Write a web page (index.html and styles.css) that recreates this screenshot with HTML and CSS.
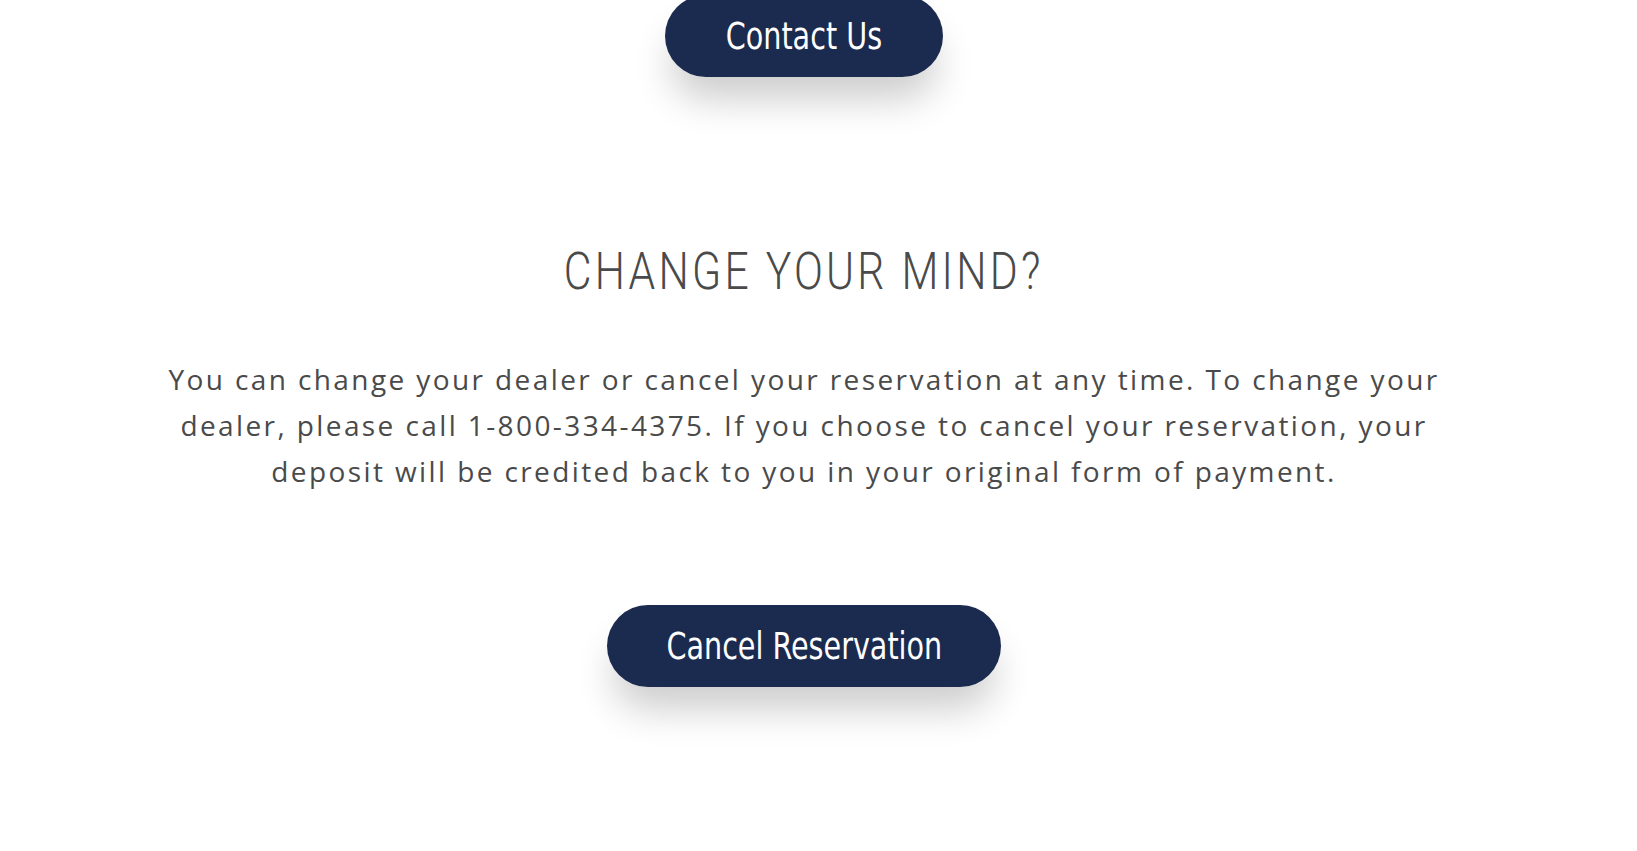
FILE: index.html
```html
<!DOCTYPE html>
<html lang="en">
<head>
<meta charset="utf-8">
<title>Change your mind</title>
<link rel="stylesheet" href="styles.css">
</head>
<body>
<main class="page">
  <section class="contact">
    <a class="pill pill-contact" href="#"><span class="pill-label">Contact Us</span></a>
  </section>
  <section class="change">
    <h2 class="change-title">CHANGE YOUR MIND?</h2>
    <p class="change-text">You can change your dealer or cancel your reservation at any time. To change your dealer, please call 1-800-334-4375. If you choose to cancel your reservation, your deposit will be credited back to you in your original form of payment.</p>
    <a class="pill pill-cancel" href="#"><span class="pill-label">Cancel Reservation</span></a>
  </section>
</main>
</body>
</html>
```

FILE: styles.css
```css
html, body {
  margin: 0;
  padding: 0;
  background: #ffffff;
  overflow: hidden;
}
.page {
  width: 1608px;
  height: 851px;
  display: flex;
  flex-direction: column;
  align-items: center;
}
.contact {
  margin-top: -5px;
  display: flex;
  justify-content: center;
}
.pill {
  display: flex;
  align-items: center;
  justify-content: center;
  height: 82px;
  border-radius: 41px;
  background: #1b2b4f;
  color: #ffffff;
  text-decoration: none;
  box-shadow: 0 28px 38px -6px rgba(0, 0, 0, 0.2);
  box-sizing: border-box;
}
.pill-label {
  display: inline-block;
  font-family: "DejaVu Sans Condensed", "DejaVu Sans", sans-serif;
  font-stretch: condensed;
  font-size: 37px;
  white-space: nowrap;
  transform: scaleX(0.86);
}
.pill-contact {
  width: 278px;
}
.pill-cancel {
  width: 394px;
  margin-top: 111px;
}
.change {
  display: flex;
  flex-direction: column;
  align-items: center;
  margin-top: 165px;
}
.change-title {
  margin: 0;
  font-family: Roboto, "DejaVu Sans", sans-serif;
  font-weight: 300;
  font-size: 52px;
  letter-spacing: 4px;
  color: #4a4a4a;
  line-height: 60px;
  white-space: nowrap;
  transform: scaleX(0.82);
}
.change-text {
  margin: 54px 0 0;
  width: 1300px;
  text-align: center;
  font-family: "Open Sans", sans-serif;
  font-size: 28px;
  line-height: 46px;
  letter-spacing: 2.4px;
  color: #4a4a4a;
}
```
